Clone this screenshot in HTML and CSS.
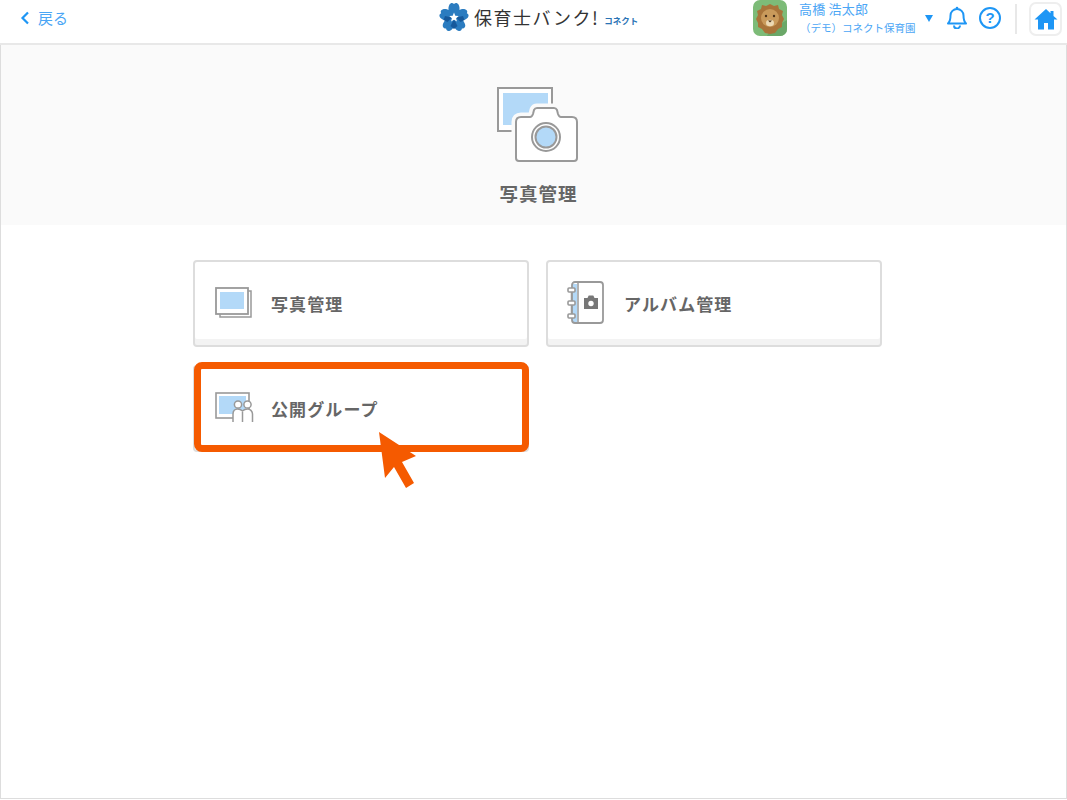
FILE: index.html
```html
<!DOCTYPE html>
<html lang="ja">
<head>
<meta charset="utf-8">
<title>写真管理</title>
<link rel="stylesheet" href="styles.css">
</head>
<body>
<header class="topbar">
  <a class="back">
    <svg class="back-icon" viewBox="0 0 10 14" width="10" height="14"><path d="M8 1.500 2.500 7 8 12.500" fill="none" stroke="#1e96f5" stroke-width="2.200"/></svg>
    <span>戻る</span>
  </a>
  <div class="logo">
    <svg class="logo-mark" viewBox="0 0 32 32" width="32" height="32">
      <g fill="#2b7cc0">
        <path d="M16 16.500C10 13 9.500 7 11.500 3.500c1.500-2 3-2 4.500-.5 1.500-1.500 3-1.500 4.500.5C22.500 7 22 13 16 16.500z"/>
        <path d="M16 16.500C10 13 9.500 7 11.500 3.500c1.500-2 3-2 4.500-.5 1.500-1.500 3-1.500 4.500.5C22.500 7 22 13 16 16.500z" transform="rotate(72 16 16.500)"/>
        <path d="M16 16.500C10 13 9.500 7 11.500 3.500c1.500-2 3-2 4.500-.5 1.500-1.500 3-1.500 4.500.5C22.500 7 22 13 16 16.500z" transform="rotate(144 16 16.500)"/>
        <path d="M16 16.500C10 13 9.500 7 11.500 3.500c1.500-2 3-2 4.500-.5 1.500-1.500 3-1.500 4.500.5C22.500 7 22 13 16 16.500z" transform="rotate(216 16 16.500)"/>
        <path d="M16 16.500C10 13 9.500 7 11.500 3.500c1.500-2 3-2 4.500-.5 1.500-1.500 3-1.500 4.500.5C22.500 7 22 13 16 16.500z" transform="rotate(288 16 16.500)"/>
      </g>
      <g fill="#17599b">
        <path d="M16 18 12.500 25l3.500 3 3.500-3z"/>
        <path d="M14 16.500 7 15l-1.500 4 4 2z"/>
        <path d="M18 16.500 25 15l1.500 4-4 2z"/>
      </g>
      <path d="m16 11.500 1.300 3.200 3.400.3-2.600 2.200.8 3.300-2.900-1.800-2.900 1.800.8-3.300-2.600-2.200 3.400-.3z" fill="#fff"/>
    </svg>
    <span class="logo-name">保育士バンク!</span>
    <span class="logo-sub">コネクト</span>
  </div>
  <div class="account">
    <svg class="avatar" viewBox="0 0 34 36" width="34" height="36">
      <rect width="34" height="36" rx="7" fill="#7dbb78"/>
      <path d="M17 30 34 20v9a7 7 0 0 1-7 7H14z" fill="#6aa768"/>
      <path d="M17 4l4 2 4-1 1 4 4 2-1 4 2 4-2 4 0 4-4 2-3 4-5 1-5-1-3-4-4-2 0-4-2-4 2-4-1-4 4-2 1-4 4 1z" fill="#a9743a"/>
      <circle cx="17" cy="18" r="9" fill="#c99a5b"/>
      <circle cx="13" cy="16" r="1.200" fill="#4a3018"/>
      <circle cx="21" cy="16" r="1.200" fill="#4a3018"/>
      <ellipse cx="17" cy="23" rx="4" ry="3.200" fill="#ecd9b4"/>
      <path d="M15 20.500h4l-2 2z" fill="#4a3018"/>
    </svg>
    <div class="user">
      <div class="user-name">高橋 浩太郎</div>
      <div class="user-org">（デモ）コネクト保育園</div>
    </div>
    <span class="caret"></span>
    <svg class="bell" viewBox="0 0 22 24" width="22" height="24"><path d="M2 18.500c2-2 2.500-3.500 2.500-8a6.500 6.500 0 0 1 13 0c0 4.500.5 6 2.500 8z" fill="none" stroke="#1e96f5" stroke-width="2" stroke-linejoin="round"/><path d="M8 20.500a3 3 0 0 0 6 0" fill="none" stroke="#1e96f5" stroke-width="2"/><circle cx="11" cy="3" r="1.300" fill="#1e96f5"/></svg>
    <span class="help">?</span>
    <span class="divider"></span>
    <span class="home">
      <svg viewBox="0 0 24 22" width="24" height="22"><path d="M12 1 0.500 11.500h3.500V21.500h6v-6.500h4v6.500h6V11.500h3.500L19.500 8V3h-3v2.200z" fill="#1e96f5"/></svg>
    </span>
  </div>
</header>

<main class="page">
  <section class="hero">
    <svg class="hero-icon" viewBox="0 0 81 76" width="81" height="76">
      <rect x="1" y="1" width="54" height="43" fill="#fff" stroke="#999" stroke-width="2"/>
      <rect x="6" y="6" width="45" height="32" fill="#b3d9f8"/>
      <path d="M19 71V35q0-5 5-5h9q2 0 3-3l1-4q1-2 3-2h17q2 0 3 2l1 4q1 3 3 3h11q5 0 5 5v36q0 3-3 3H22q-3 0-3-3z" fill="#fff" stroke="#fafafa" stroke-width="9"/>
      <path d="M19 71V35q0-5 5-5h9q2 0 3-3l1-4q1-2 3-2h17q2 0 3 2l1 4q1 3 3 3h11q5 0 5 5v36q0 3-3 3H22q-3 0-3-3z" fill="#fff" stroke="#999" stroke-width="2"/>
      <circle cx="49" cy="50" r="14" fill="#fff" stroke="#999" stroke-width="2"/>
      <circle cx="49" cy="50" r="10.500" fill="#b3d9f8" stroke="#999" stroke-width="2"/>
    </svg>
    <h1 class="hero-title">写真管理</h1>
  </section>

  <div class="cards">
    <a class="card">
      <svg class="card-icon" viewBox="0 0 37 31" width="37" height="31">
        <path d="M33 4h3v26H5v-3" fill="none" stroke="#999" stroke-width="1.500"/>
        <rect x="1" y="1" width="32" height="26" fill="#fff" stroke="#999" stroke-width="1.800"/>
        <rect x="5" y="5" width="24" height="17" fill="#b3d9f8"/>
      </svg>
      <span class="card-label">写真管理</span>
    </a>
    <a class="card">
      <svg class="card-icon" viewBox="0 0 37 43" width="37" height="43">
        <path d="M5 3h5v38H5z" fill="#b3d9f8"/>
        <rect x="5" y="1" width="31" height="41" rx="3" fill="none" stroke="#999" stroke-width="1.800"/>
        <path d="M11 1v41" stroke="#999" stroke-width="1.500"/>
        <g fill="#fff" stroke="#999" stroke-width="1.600">
          <rect x="1" y="7" width="7" height="4" rx="1"/>
          <rect x="1" y="20" width="7" height="4" rx="1"/>
          <rect x="1" y="33" width="7" height="4" rx="1"/>
        </g>
        <path d="M4.500 11v9M4.500 24v9" stroke="#999" stroke-width="1.500"/>
        <path d="M17 17h3.500l1.200-2.500h4.600l1.200 2.500H31v11H17z" fill="#777"/>
        <circle cx="24" cy="22.500" r="2.700" fill="#fff"/>
      </svg>
      <span class="card-label">アルバム管理</span>
    </a>
    <a class="card card-low">
      <svg class="card-icon" viewBox="0 0 40 30" width="40" height="30">
        <rect x="1" y="1" width="33" height="25" fill="#fff" stroke="#999" stroke-width="1.600"/>
        <rect x="4" y="4" width="27" height="18" fill="#b3d9f8"/>
        <path d="M18 30V22c0-3 2-5 4.500-5s4 1 5 2c1-1 2.500-2 5-2s5 2 5 5v8" fill="#fff" stroke="#999" stroke-width="1.500"/>
        <circle cx="23" cy="12.500" r="3.600" fill="#fff" stroke="#999" stroke-width="1.500"/>
        <circle cx="32.500" cy="12.500" r="3.600" fill="#fff" stroke="#999" stroke-width="1.500"/>
        <path d="M27.500 20v10" stroke="#999" stroke-width="1.500"/>
      </svg>
      <span class="card-label">公開グループ</span>
    </a>
  </div>
</main>

<div class="highlight"></div>
<svg class="pointer" viewBox="0 0 40 62" width="40" height="62"><path d="M1 1 38 25 24 31 36 52 28 57 16 36 7 47z" fill="#f55a00"/></svg>
</body>
</html>
```
FILE: styles.css
```css
* { box-sizing: border-box; }
html, body { margin: 0; height: 100%; }
body {
  position: relative;
  width: 1067px;
  height: 800px;
  overflow: hidden;
  background: #fff;
  font-family: "Noto Sans CJK JP", "Noto Sans", sans-serif;
  color: #666;
}
.topbar {
  height: 45px;
  display: flex;
  align-items: center;
  justify-content: space-between;
  position: relative;
  border-bottom: 2px solid #e8e8e8;
}
.back {
  display: flex;
  align-items: center;
  gap: 8px;
  padding: 0 0 7px 20px;
  color: #4ba6f5;
  font-size: 15px;
  line-height: 20px;
}
.back-icon { display: block; }
.logo {
  position: absolute;
  left: 438px;
  top: 1px;
  display: flex;
  align-items: center;
  height: 32px;
}
.logo-mark { display: block; }
.logo-name {
  margin-left: 4px;
  font-weight: 400;
  font-size: 18px;
  letter-spacing: 1.500px;
  color: #333;
  white-space: nowrap;
}
.logo-sub {
  margin: 5px 0 0 5px;
  font-size: 8.500px;
  font-weight: 700;
  color: #2a73b5;
  white-space: nowrap;
}
.account {
  display: flex;
  align-items: center;
  margin-left: auto;
  height: 43px;
  padding-right: 5px;
}
.avatar { display: block; margin-top: -7px; }
.user {
  width: 126px;
  margin: -7px 0 0 12px;
  color: #4ba6f5;
}
.user-name { font-size: 13px; line-height: 17px; letter-spacing: .2px; }
.user-org { font-size: 10.500px; line-height: 17px; margin: 2px 0 0 1px; white-space: nowrap; }
.caret {
  width: 0;
  height: 0;
  margin: -6px 0 0 0;
  border-left: 4px solid transparent;
  border-right: 4px solid transparent;
  border-top: 7px solid #1e96f5;
}
.bell { display: block; margin: -9px 0 0 13px; }
.help {
  width: 22px;
  height: 22px;
  margin: -8px 0 0 11px;
  border: 2px solid #1e96f5;
  border-radius: 50%;
  color: #1e96f5;
  font: 700 15px/18px "Liberation Sans", sans-serif;
  text-align: center;
}
.divider {
  width: 2px;
  height: 30px;
  margin: -6px 0 0 14px;
  background: #e8e8e8;
}
.home {
  width: 33px;
  height: 34px;
  margin: -6px 0 0 12px;
  border: 2px solid #eee;
  border-radius: 7px;
  display: flex;
  align-items: center;
  justify-content: center;
}
.home svg { display: block; }
.page {
  height: 754px;
  border-left: 1px solid #ddd;
  border-right: 1px solid #ddd;
  border-bottom: 1px solid #ddd;
}
.hero {
  height: 180px;
  background: #fafafa;
  display: flex;
  flex-direction: column;
  align-items: center;
  padding: 42px 0 0 6px;
}
.hero-icon { display: block; margin-left: 1px; }
.hero-title {
  margin: 17px 0 0 4px;
  font-size: 18.500px;
  line-height: 26px;
  font-weight: 700;
  color: #666;
  letter-spacing: 1px;
}
.cards {
  display: grid;
  grid-template-columns: 336px 336px;
  column-gap: 17px;
  row-gap: 18px;
  padding: 35px 0 0 192px;
}
.card {
  height: 87px;
  display: flex;
  align-items: center;
  background: #fff;
  border: 2px solid #ddd;
  border-radius: 4px;
  box-shadow: inset 0 -6px 0 #f3f3f3;
  padding: 0 0 0 20px;
}
.card-low { box-shadow: none; }
.card-icon { display: block; flex: none; margin-top: -3px; }
.card-label {
  position: absolute;
  left: 271px;
  font-size: 17px;
  font-weight: 700;
  color: #666;
  letter-spacing: 1.100px;
}
.card:nth-child(2) .card-label { left: 624px; }
.card:nth-child(2) .card-icon { margin-left: -1px; }
.highlight {
  position: absolute;
  left: 194px;
  top: 362px;
  width: 335px;
  height: 90px;
  border: 7px solid #f55a00;
  border-radius: 8px;
}
.pointer {
  position: absolute;
  left: 378px;
  top: 431px;
}
```
